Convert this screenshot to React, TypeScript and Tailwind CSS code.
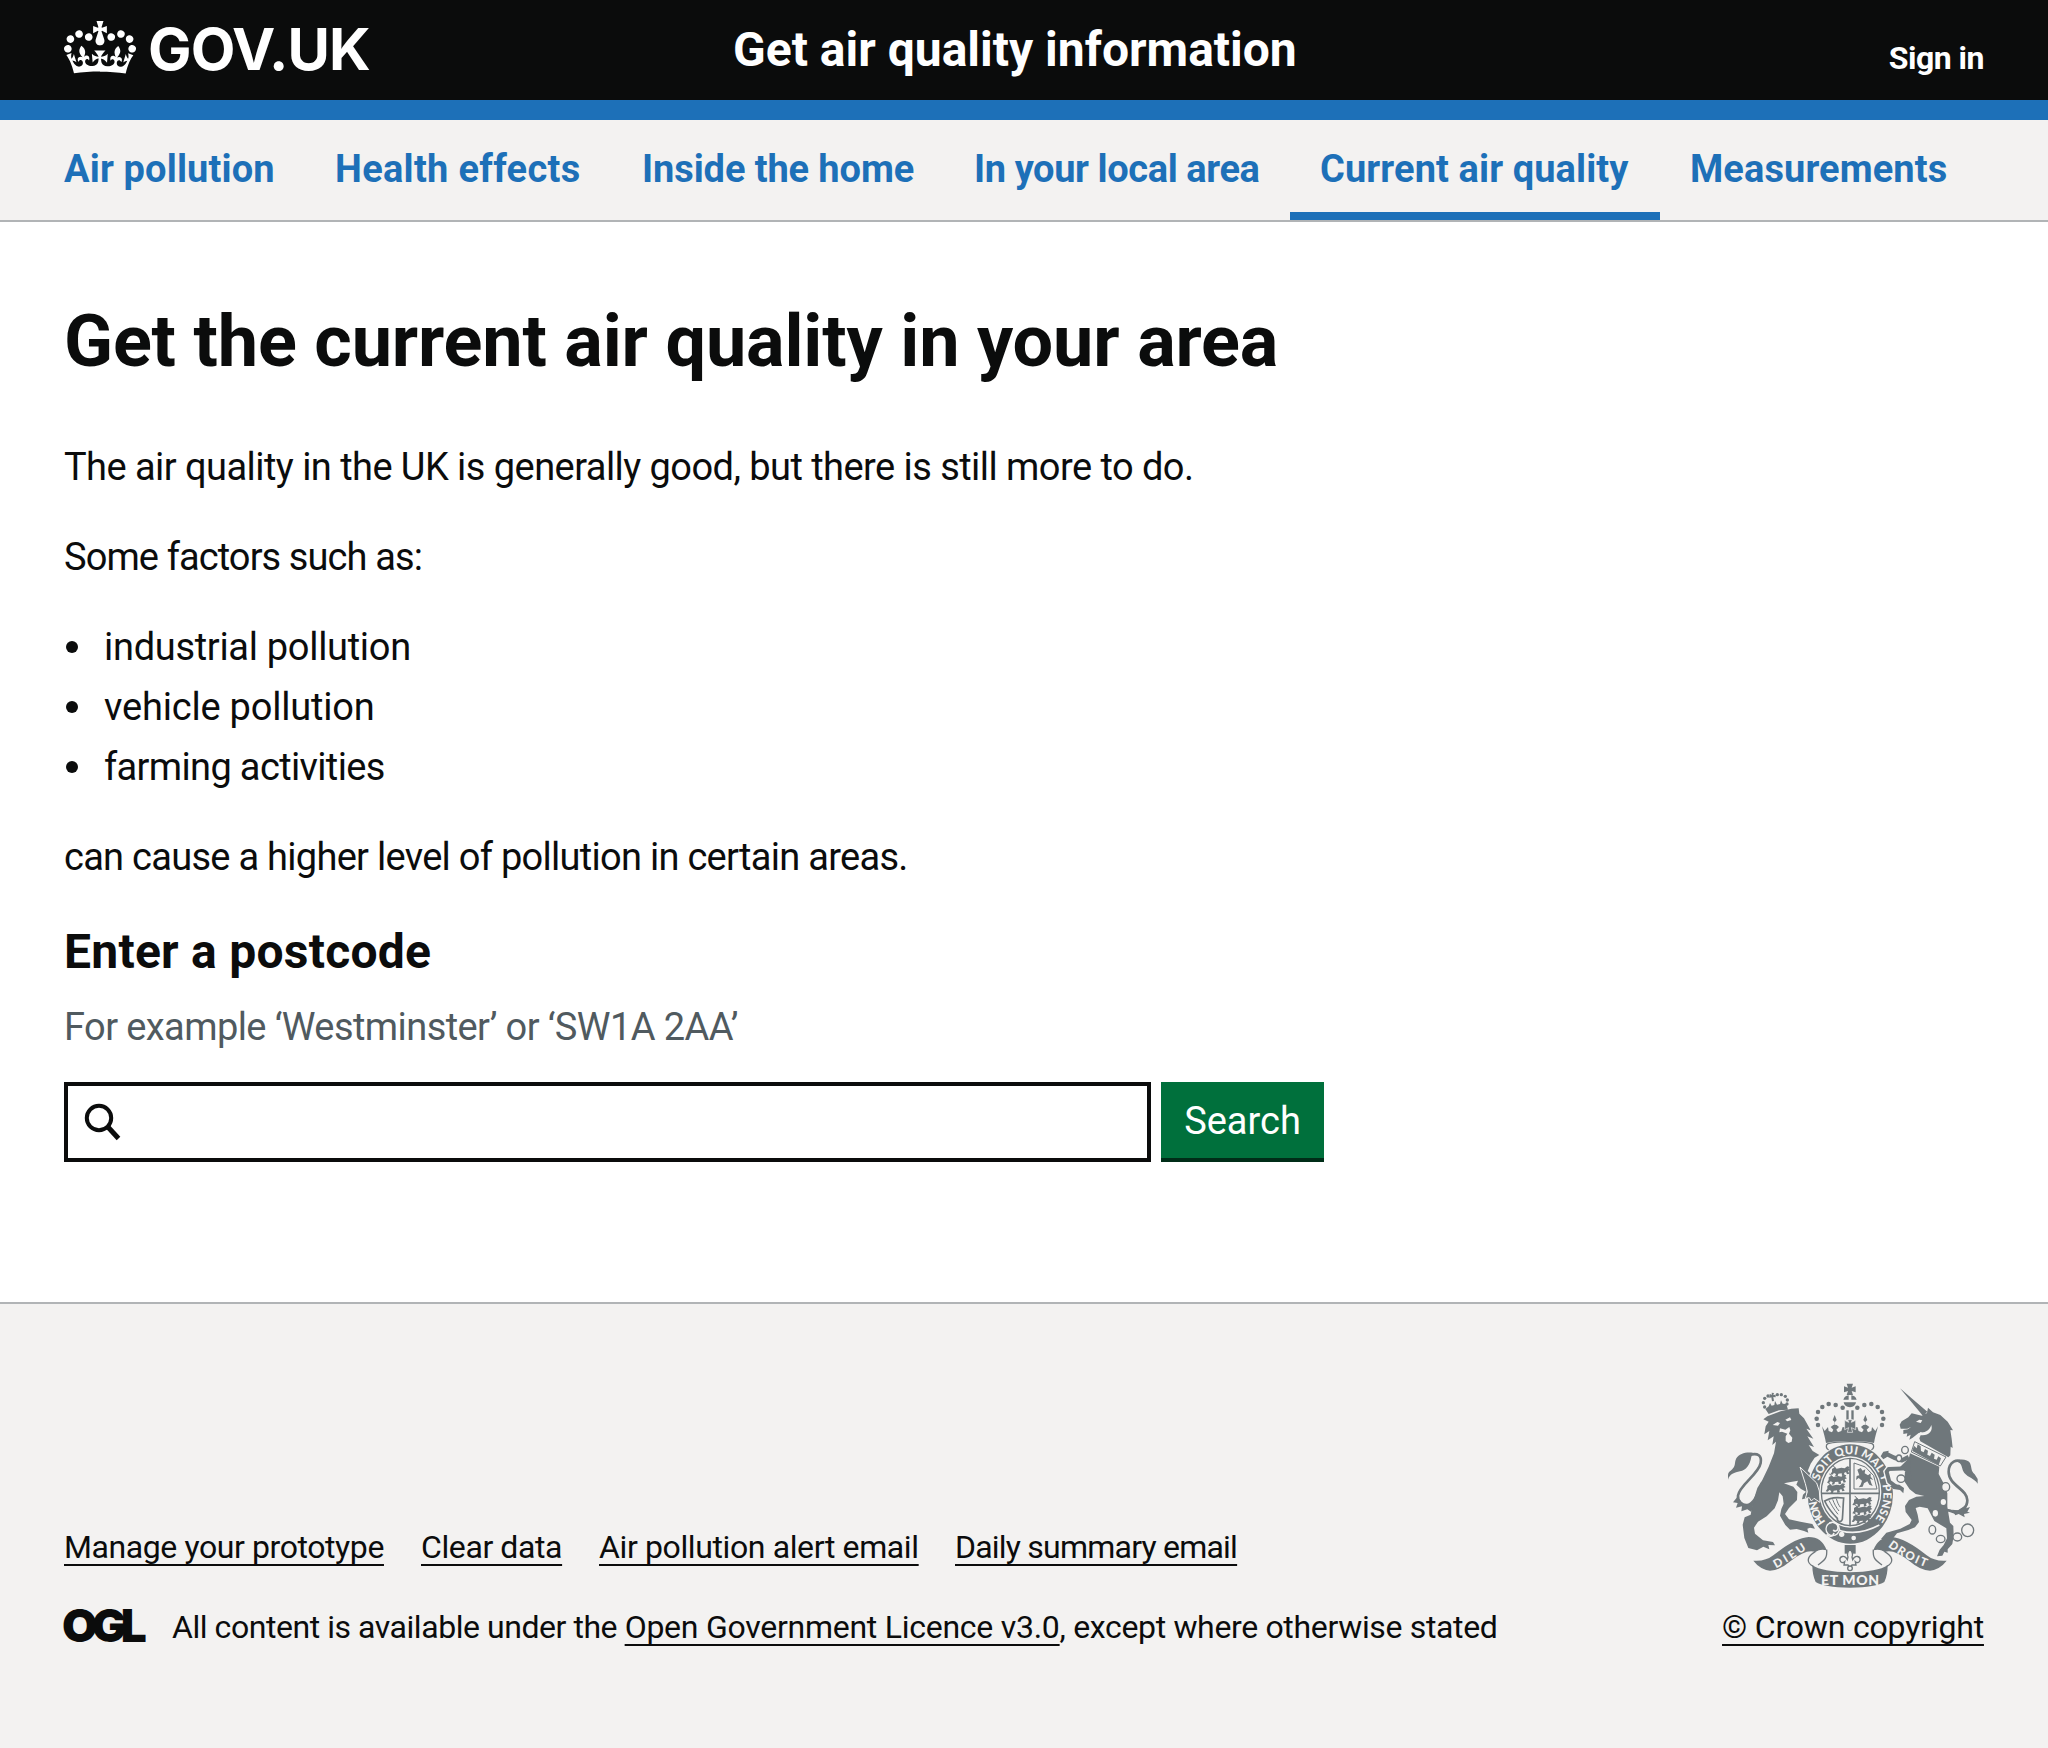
import type { ReactNode } from "react";

const INK = "#6f777b";
const PAPER = "#f3f2f1";

function Crown() {
  return (
    <svg viewBox="0 0 132 97" className="h-[53px] w-[72px] shrink-0" fill="currentColor" aria-hidden="true">
      <path
        fillRule="evenodd"
        d="M25 30.2c3.5 1.5 7.7-.2 9.1-3.7 1.5-3.6-.2-7.8-3.9-9.2-3.6-1.4-7.6.3-9.1 3.9-1.4 3.5.3 7.5 3.9 9zM9 39.5c3.6 1.5 7.8-.2 9.2-3.7 1.5-3.6-.2-7.8-3.9-9.1-3.6-1.5-7.6.2-9.1 3.8-1.4 3.5.3 7.5 3.8 9zM4.4 57.2c3.5 1.5 7.7-.2 9.1-3.8 1.5-3.6-.2-7.7-3.9-9.1-3.5-1.5-7.6.3-9.1 3.8-1.4 3.5.3 7.6 3.9 9.1zm38.3-21.4c3.5 1.5 7.7-.2 9.1-3.8 1.5-3.6-.2-7.7-3.9-9.1-3.6-1.5-7.6.3-9.1 3.8-1.3 3.6.4 7.7 3.9 9.1zm64.4-5.6c-3.6 1.5-7.8-.2-9.1-3.7-1.5-3.6.2-7.8 3.8-9.2 3.6-1.4 7.7.3 9.2 3.9 1.3 3.5-.4 7.5-3.9 9zm15.9 9.3c-3.6 1.5-7.7-.2-9.1-3.7-1.5-3.6.2-7.8 3.7-9.1 3.6-1.5 7.7.2 9.2 3.8 1.5 3.5-.3 7.5-3.8 9zm4.7 17.7c-3.6 1.5-7.8-.2-9.2-3.8-1.5-3.6.2-7.7 3.9-9.1 3.6-1.5 7.7.3 9.2 3.8 1.3 3.5-.4 7.6-3.9 9.1zM89.3 35.8c-3.6 1.5-7.8-.2-9.2-3.8-1.4-3.6.2-7.7 3.9-9.1 3.6-1.5 7.7.3 9.2 3.8 1.4 3.6-.3 7.7-3.9 9.1zM69.7 17.7l8.9 4.7V9.3l-8.9 2.8c-.2-.3-.5-.6-.9-.9L72.4 0H59.6l3.5 11.2c-.3.3-.6.5-.9.9l-8.8-2.8v13.1l8.8-4.7c.3.3.6.7.9.9l-5 15.4v.1c-.2.8-.4 1.6-.4 2.4 0 4.1 3.1 7.5 7 8.1h.2c.3 0 .7.1 1 .1.4 0 .7 0 1-.1h.2c4-.6 7.1-4.1 7.1-8.1 0-.8-.1-1.7-.4-2.4V34l-5.1-15.4c.4-.2.7-.6 1-.9zM66 92.8c16.9 0 32.8 1.1 47.1 3.2 4-16.9 8.9-26.7 14-33.5l-9.6-3.4c1 4.9 1.1 7.2 0 10.2-1.5-1.4-3-4.3-4.2-8.7L108.6 76c2.8-2 5-3.2 7.5-3.3-4.4 9.4-10 11.9-13.6 11.2-4.3-.8-6.3-4.6-5.6-7.9 1-4.7 5.7-5.9 8-.5 4.3-8.7-3-11.4-7.6-8.8 7.1-7.2 7.9-13.5 2.1-21.1-8 6.1-8.1 12.3-4.5 20.8-4.7-5.4-12.1-2.5-9.5 6.2 3.4-5.2 7.9-2 7.2 3.1-.6 4.3-6.4 7.8-13.5 7.2-10.3-.9-10.9-8-11.2-13.8 2.5-.5 7.1 1.8 11 7.3L80.2 60c-4.1 4.4-8 5.3-12.3 5.4 1.4-4.4 8-11.6 8-11.6H55.5s6.4 7.2 7.9 11.6c-4.2-.1-8-1-12.3-5.4l1.4 16c3.9-5.5 8.5-7.7 10.9-7.3-.3 5.8-.9 12.8-11.1 13.8-7.2.6-12.9-2.9-13.5-7.2-.7-5 3.8-8.3 7.1-3.1 2.7-8.7-4.6-11.6-9.4-6.2 3.7-8.5 3.6-14.7-4.6-20.8-5.8 7.6-5 13.9 2.2 21.1-4.7-2.6-11.9.1-7.7 8.8 2.3-5.5 7.1-4.2 8.1.5.7 3.3-1.3 7.1-5.7 7.9-3.5.7-9-1.8-13.5-11.2 2.5.1 4.7 1.3 7.5 3.3l-4.7-15.4c-1.2 4.4-2.7 7.2-4.3 8.7-1.1-3-.9-5.3 0-10.2l-9.5 3.4c5 6.9 9.9 16.7 14 33.5 14.8-2.1 30.8-3.2 47.7-3.2z"
      />
    </svg>
  );
}

/* Left half of the central crown; mirrored for the right half. */
function CrownHalf() {
  const beads = [
    [428, 144], [407, 136], [386, 133], [367, 142], [354, 157], [350, 177], [354, 196],
  ];
  return (
    <g>
      {beads.map(([x, y]) => (
        <circle key={x + "-" + y} cx={x} cy={y} r="6.8" />
      ))}
      <path d="M366 200l8 14 10-12 2 12 10 4 4-8-8-8 8-6 4-1 0-8-6-6 6-15 6 15-5 6v8l5 1 7 6-8 8 5 8 10-4 4-12 12 2 10-2v42c-30 0-52 2-72 6-2-14-8-32-12-50z" />
      <path d="M450 246c-28 0-50 2-66 6-8 4-6 16 2 19" fill="none" stroke={INK} strokeWidth="4" />
      <path d="M439 152h7v28h-7z" />
    </g>
  );
}

/* Walking lion used in the shield quarters. */
function Passant({ x, y }: { x: number; y: number }) {
  return (
    <g transform={`translate(${x} ${y})`}>
      <path
        d="M-8 2l8-5 6 4 14-3 10 2 8-6 7 2-3 5 5 4-7 3 4 8-7 2-3-7-6 3 2 7-8 2-1-8-10 1-2 7-8 1 3-7-6-3-5 5-6-1 5-8z"
        fill={INK}
      />
      <path d="M-6-8c8 2 4 8 10 8" fill="none" stroke={INK} strokeWidth="3" />
    </g>
  );
}

function Shield() {
  return (
    <g>
      <ellipse cx="451" cy="403" rx="132" ry="153" fill={PAPER} />
      <ellipse cx="451" cy="403" rx="128" ry="149" fill={INK} />
      <ellipse cx="451" cy="397" rx="93" ry="107" fill={PAPER} />
      <ellipse cx="451" cy="397" rx="87" ry="101" fill="none" stroke={INK} strokeWidth="4" />
      <path d="M450 296v204M363 401h176" stroke={INK} strokeWidth="5" />
      <Passant x={404} y={326} />
      <Passant x={394} y={351} />
      <Passant x={390} y={377} />
      <Passant x={470} y={418} />
      <Passant x={470} y={443} />
      <Passant x={468} y={468} />
      <path d="M462 310l34 12 25 26 10 40h-69z" fill="none" stroke={INK} strokeWidth="3" />
      <path d="M472 330l10-5 6 8 8-4-2 12 10 6 8-6 0 10 8 10-10-4 4 14 4 8-10-4-6-10-10 6-4 10-12 2 6-8 4-12-10-8-8 6 2-12 8-2z" fill={INK} />
      <path d="M374 424c20-10 32-12 57-9-2 22-2 42-4 64-4 12-16 6-15-3-10-10-26-26-38-52z" fill="none" stroke={INK} strokeWidth="5" />
      <path d="M387 422c6 12 14 26 27 42M398 419c4 12 10 24 19 35M409 417c3 10 6 18 12 26" fill="none" stroke={INK} strokeWidth="3" />
      <path d="M398 500c30 24 84 26 140-4" fill="none" stroke={PAPER} strokeWidth="5" />
      <circle cx="398" cy="508" r="20" fill={INK} stroke={PAPER} strokeWidth="4" />
      <path d="M388 490c14-6 28 2 26 16-2 10-12 10-14 4M380 524c8 10 20 6 22-4" fill="none" stroke={PAPER} strokeWidth="5" />
      <circle cx="425" cy="524" r="8" fill={PAPER} />
      <circle cx="461" cy="535" r="7" fill={PAPER} />
      <path id="garter" d="M451 520C394 520 350 468 350 403S396 281 451 281 552 336 552 403 506 520 451 520" fill="none" />
      <path id="garter-end" d="M388 500C362 478 348 445 347 403" fill="none" />
      <g fill={PAPER} fontFamily="Lato, sans-serif" fontWeight="900" fontSize="34">
        <text dy="2">
          <textPath href="#garter-end" startOffset="18" textLength="70">HON</textPath>
        </text>
        <text dy="2">
          <textPath href="#garter" startOffset="212" textLength="392">SOIT QUI MAL Y PENSE</textPath>
        </text>
      </g>
    </g>
  );
}

function Lion() {
  return (
    <g fill={INK}>
      <g>
        {[[194, 142], [190, 129], [194, 116], [204, 109], [232, 105], [244, 105], [256, 110], [262, 121], [261, 133]].map(([x, y]) => (
          <circle key={x + "-" + y} cx={x} cy={y} r="5" />
        ))}
        <path d="M209 103l7 2-1-6 7 1-2 6 7-1v8l-7-1 2 12-6 1-2-12-6 2z" />
        <path d="M196 148l10-8 4-10 5 8 8-2 2-12 6 11 9-2 3-11 5 10 11 1 5 17-27 2-31 11z" />
      </g>
      <path d="M190 179l12-9 40-15 32-8 22-1 2 16 14 14 20 36-13-5 21 30-18-7 20 32-16-6 12 18 20 12-14 8-12 18-9 22 33 29 4 20-2 20-6 20-16-9-6 9-7-8-17 4 3-14 9-9-15-8-14-13 5-12-26 5-16 3 28 10 12 16-1 24-24 24-12 18 12 16 34 7 36 7 8 14-15-3-8 3 3 12-13-5-22-6-20 2-14-14-16-28 4-20 7-16-3-22-10-12-4 24-10 24-24 24-26 16-12 18 3 18 24 20 30 5 6 10-20-1 3 13-18-8-19 11-26-7-12-30-5-40 6-22 18-8 7-38 13-42 15-24 19-40 16-40 6-35-11 10 4-26-18 12 5-28-15 10 4-24 9-14z" />
      <path d="M218 196l14-9 8 3-6 8zM256 180l14-7 4 8-12 4zM240 206l16 4 12-8 3 10-4 10 10 12-2 12-10 4-8-6v-14l5-8-16-6-8 2z" fill={PAPER} />
      <path d="M148 286c26-8 38 2 34 24-6 34-64 66-68 98-2 18 14 30 28 28 18-2 28-24 44-66" fill="none" stroke={INK} strokeWidth="8" />
      <path d="M160 280c-20-4-42 2-51 16-6 12-2 22-10 30-6 8-14 10-15 20v14c4-16 20-22 36-25 18-4 30-18 34-44zM112 412l-13 16 14 2-5 14 18-4-2 15 18-6 12 8 6-22 14-20-24 20-22-2z" />
    </g>
  );
}

function Unicorn() {
  return (
    <g fill={INK}>
      <path d="M600 86l82 70-13 13zM666 168l15-8 3-16 15 14 22 8 22 20 16 26-8-1 4 26 3 28-6-4-1 26-6 6-84-48-3-9 8-18-10 2-18 14-10 6 4-15-12 6 2-10-12 2v-12l14-2 10-8-12 6-20 0-3-12 6-10 20-12 10-12z" />
      <path d="M648 186l10-6 9 2-5 8zM660 218c16 2 28-6 34-22 6 20-10 34-34 30z" fill={PAPER} />
      <path d="M644 246l94 46-17 27-87-42z" fill={PAPER} stroke={INK} strokeWidth="3" />
      <path d="M637 274l5-16 8 8 3-12 9 6 1 14 8 4 4-10 9 5-2 12 8 4 5-10 9 6-2 12 8 3 5-10 8 6-7 21z" />
      <path d="M630 281l88 40-2 22 16 30 10 28 0 40 8 48 10 10 1 30-4 24-14 16 0 10-10-3-6 12-16 2 8-20 12-14 10-20-2-30-36-22-20-38-24-5-12 4 6 20 4 22-12 16-20 8-34 10-14 18-34-1 16-19 42-12 28-14 6-12-18-24-2-18 12-18 22-10 24-2-26-6-18-14-16-24 2-32 10-30z" />
      <path d="M736 452c10-2 18 2 28 6 22-2 38-16 38-36 0-34-56-44-56-86 0-28 26-44 44-24" fill="none" stroke={INK} strokeWidth="8" />
      <path d="M762 304c18-8 42-6 48 6 6 14 2 24 14 34l9 14v14c-10-16-28-18-40-32-8-10-6-26-17-32zM756 450l18 2 30-20-6 14 12-4-8 14 8 3-18 4 2 10-18-10-10 4z" />
      <g fill={PAPER}>
        <ellipse cx="730" cy="427" rx="8" ry="9" />
        <ellipse cx="706" cy="461" rx="8" ry="10" />
      </g>
    </g>
  );
}

/* Forelegs and chain, which lie over the garter. */
function UnicornFront() {
  const rings: [number, number, number, number][] = [
    [615, 271, 10, 11], [603, 357, 12, 11], [597, 296, 8, 10], [737, 382, 12, 13], [697, 510, 10, 13],
    [722, 538, 13, 11], [772, 532, 13, 12], [803, 512, 18, 19],
  ];
  return (
    <g fill={INK}>
      <path
        d="M626 292l-20 10-24-8-20-10-12 5M624 326l-58 2-6 8 8 30 22 16"
        fill="none"
        stroke={PAPER}
        strokeWidth="20"
      />
      <path d="M626 292l-20 10-24-8-20-10-12 5" fill="none" stroke={INK} strokeWidth="13" strokeLinejoin="round" />
      <path d="M624 326l-58 2-6 8 8 30 22 16" fill="none" stroke={INK} strokeWidth="12" strokeLinejoin="round" />
      <path d="M542 290l8-14 16-3-4 18-12 8zM582 374l16 1 14 10-2 16-10-10-20-3-10-8zM600 322l30-30 4 70-16-24z" />
      {rings.map(([x, y, rx, ry]) => (
        <ellipse key={x} cx={x} cy={y} rx={rx} ry={ry} fill={PAPER} stroke={INK} strokeWidth="4" />
      ))}
    </g>
  );
}

/* Left ribbon with its curl; mirrored for the right side. */
function Ribbon() {
  return (
    <g>
      <path d="M160 603Q196 606 220 587Q284 535 326 532Q366 532 380 572Q362 566 346 577Q320 566 272 604Q238 633 210 633Q180 629 160 603z" fill={INK} />
      <path d="M380 570c2 24-4 30-26 46M346 576c-24 14-30 32-6 44" fill="none" stroke={INK} strokeWidth="4" />
    </g>
  );
}

function CoatOfArms() {
  return (
    <svg viewBox="84 70 750 615" className="h-[205px] w-[250px]" role="img" aria-label="Royal coat of arms">
      <defs>
        <path id="dieu" d="M228 626Q278 600 332 560" />
        <path id="droit" d="M563 560Q620 604 690 627" />
      </defs>
      <Lion />
      <Unicorn />
      <Shield />
      <UnicornFront />
      {/* lion's arm over the garter */}
      <path d="M300 322l50 48 8 24 2 34-18-12-8 8-6-10-12 2 6-20-6-24z" fill={INK} stroke={PAPER} strokeWidth="3" />
      <g fill={INK}>
        <CrownHalf />
        <g transform="translate(900 0) scale(-1 1)">
          <CrownHalf />
        </g>
        <path d="M440 72h19l-4 12 12-4v18l-12-4 4 12h-19l4-12-12 4V80l12 4zM430 120q4-12 16-13v13zM470 120q-4-12-16-13v13zM431 128h37q-2 14-18 15-17-1-19-15z" />
        <path d="M434 182l12 6-3-8h14l-3 8 13-6v28l-13-6 4 14h-16l4-14-12 6z" stroke={PAPER} strokeWidth="2" />
      </g>
      <Ribbon />
      <g transform="translate(900 0) scale(-1 1)">
        <Ribbon />
      </g>
      <path d="M337 617q30 20 113 21 83-1 113-21 0 30-10 50-24 16-103 17-79-1-103-17-10-20-10-50z" fill={INK} />
      <g fill={PAPER} fontFamily="Lato, sans-serif" fontWeight="900" fontSize="42">
        <text x="363" y="675" textLength="174">ET MON</text>
        <text fontSize="35">
          <textPath href="#dieu" textLength="108">DIEU</textPath>
        </text>
        <text fontSize="35">
          <textPath href="#droit" textLength="130">DROIT</textPath>
        </text>
      </g>
      <path d="M434 556h33v26h-33z" fill={INK} />
      <path
        d="M450 568c-8 10-10 16-6 24l-2 8c-8-16-24-10-22 2 2 8 10 8 14 4l-2 10h12l6 8 6-8h12l-2-10c4 4 12 4 14-4 2-12-14-18-22-2l-2-8c4-8 2-14-6-24z"
        fill={PAPER}
        stroke={INK}
        strokeWidth="4"
      />
      <circle cx="450" cy="626" r="7" fill={PAPER} stroke={INK} strokeWidth="4" />
    </svg>
  );
}

const NAV = [
  { label: "Air pollution", box: "w-[211px] tracking-[0.15px]" },
  { label: "Health effects", box: "w-[247px] tracking-[0.3px]" },
  { label: "Inside the home", box: "w-[272px] tracking-[-0.1px]" },
  { label: "In your local area", box: "w-[286px] tracking-[-0.4px]" },
  { label: "Current air quality", box: "w-[310px] tracking-[0.1px]", active: true },
  { label: "Measurements", box: "w-[260px] tracking-[0.1px]" },
];

const FACTORS = [
  { label: "industrial pollution", spacing: "tracking-[-0.3px]" },
  { label: "vehicle pollution", spacing: "tracking-[-0.2px]" },
  { label: "farming activities", spacing: "tracking-[-0.65px]" },
];

function FooterLink({ className = "", children }: { className?: string; children: ReactNode }) {
  return (
    <a
      href="#"
      className={`whitespace-nowrap underline decoration-2 underline-offset-[6px] [text-decoration-skip-ink:none] ${className}`}
    >
      {children}
    </a>
  );
}

export default function App() {
  return (
    <div className="flex min-h-[1748px] w-full flex-col bg-white font-['Roboto','Liberation_Sans',sans-serif] text-[38px] leading-[50px] text-[#0b0c0c]">
      <header className="flex h-[120px] items-start border-b-[20px] border-[#1d70b8] bg-[#0b0c0c] px-16 text-white">
        <a href="#" className="flex w-[669px] items-start pt-[21px]">
          <Crown />
          <span className="-mt-[5px] ml-3 font-['Inter',sans-serif] text-[58px] leading-[66px] font-bold tracking-[-0.9px]">
            GOV.UK
          </span>
        </a>
        <a href="#" className="pt-5 text-[48px] leading-[60px] font-bold whitespace-nowrap">
          Get air quality information
        </a>
        <a href="#" className="ml-auto pt-[38px] text-[32px] leading-10 font-bold tracking-[-0.5px]">
          Sign in
        </a>
      </header>

      <nav className="flex h-[102px] border-b-2 border-[#b1b4b6] bg-[#f3f2f1] px-[34px] font-bold text-[#1d70b8]">
        {NAV.map((item) => (
          <a
            key={item.label}
            href="#"
            className={`border-b-8 px-[30px] pt-6 whitespace-nowrap ${item.active ? "border-[#1d70b8]" : "border-transparent"}`}
          >
            <span className={`block ${item.box}`}>{item.label}</span>
          </a>
        ))}
      </nav>

      <main className="h-[1080px] px-16 pt-[82px]">
        <h1 className="text-[72px] leading-[75px] font-bold tracking-[-0.17px]">
          Get the current air quality in your area
        </h1>
        <p className="mt-[63px] tracking-[-0.55px]">
          The air quality in the UK is generally good, but there is still more to do.
        </p>
        <p className="mt-10 tracking-[-0.9px]">Some factors such as:</p>
        <ul className="mt-10 flex flex-col gap-2.5">
          {FACTORS.map((f) => (
            <li key={f.label} className={`flex items-center ${f.spacing}`}>
              <span className="mr-[26px] ml-0.5 size-3 rounded-full bg-[#0b0c0c]" />
              {f.label}
            </li>
          ))}
        </ul>
        <p className="mt-10 tracking-[-0.72px]">can cause a higher level of pollution in certain areas.</p>
        <form className="mt-10">
          <h2 className="text-[48px] leading-[60px] font-bold tracking-[0.25px]">Enter a postcode</h2>
          <p className="mt-5 tracking-[-0.58px] text-[#505a5f]">For example ‘Westminster’ or ‘SW1A 2AA’</p>
          <div className="mt-[30px] flex h-20 gap-2.5">
            <div className="flex w-[1087px] items-center border-4 border-[#0b0c0c] pl-4">
              <svg viewBox="0 0 38 40" className="h-10 w-[38px]" fill="none" stroke="#0b0c0c" aria-hidden="true">
                <circle cx="15" cy="16" r="12.2" strokeWidth="4" />
                <path d="M23.5 24.5L34.5 36.5" strokeWidth="5" />
              </svg>
            </div>
            <button
              type="button"
              className="w-[163px] bg-[#00703c] pb-0.5 text-white shadow-[inset_0_-4px_0_#002d18]"
            >
              Search
            </button>
          </div>
        </form>
      </main>

      <footer className="flex grow items-start justify-between border-t-2 border-[#b1b4b6] bg-[#f3f2f1] px-16 text-[32px] leading-10">
        <div className="flex flex-col gap-10 pt-[223px]">
          <div className="flex gap-[37px]">
            <FooterLink className="w-80 tracking-[-0.41px]">Manage your prototype</FooterLink>
            <FooterLink className="w-[141px] tracking-[-0.4px]">Clear data</FooterLink>
            <FooterLink className="w-[319px] tracking-[-0.38px]">Air pollution alert email</FooterLink>
            <FooterLink className="tracking-[-0.78px]">Daily summary email</FooterLink>
          </div>
          <div className="flex">
            <span className="-ml-0.5 w-[110px] font-['Inter',sans-serif] text-[46px] leading-9 font-black tracking-[-5.8px]">
              OGL
            </span>
            <p className="whitespace-nowrap">
              <span className="tracking-[-0.45px]">All content is available under the </span>
              <FooterLink className="tracking-[-0.26px]">Open Government Licence v3.0</FooterLink>
              <span className="tracking-[-0.34px]">, except where otherwise stated</span>
            </p>
          </div>
        </div>
        <div className="flex w-[262px] flex-col items-center pt-[79px]">
          <CoatOfArms />
          <FooterLink className="mt-[19px] tracking-[-0.18px]">© Crown copyright</FooterLink>
        </div>
      </footer>
    </div>
  );
}
